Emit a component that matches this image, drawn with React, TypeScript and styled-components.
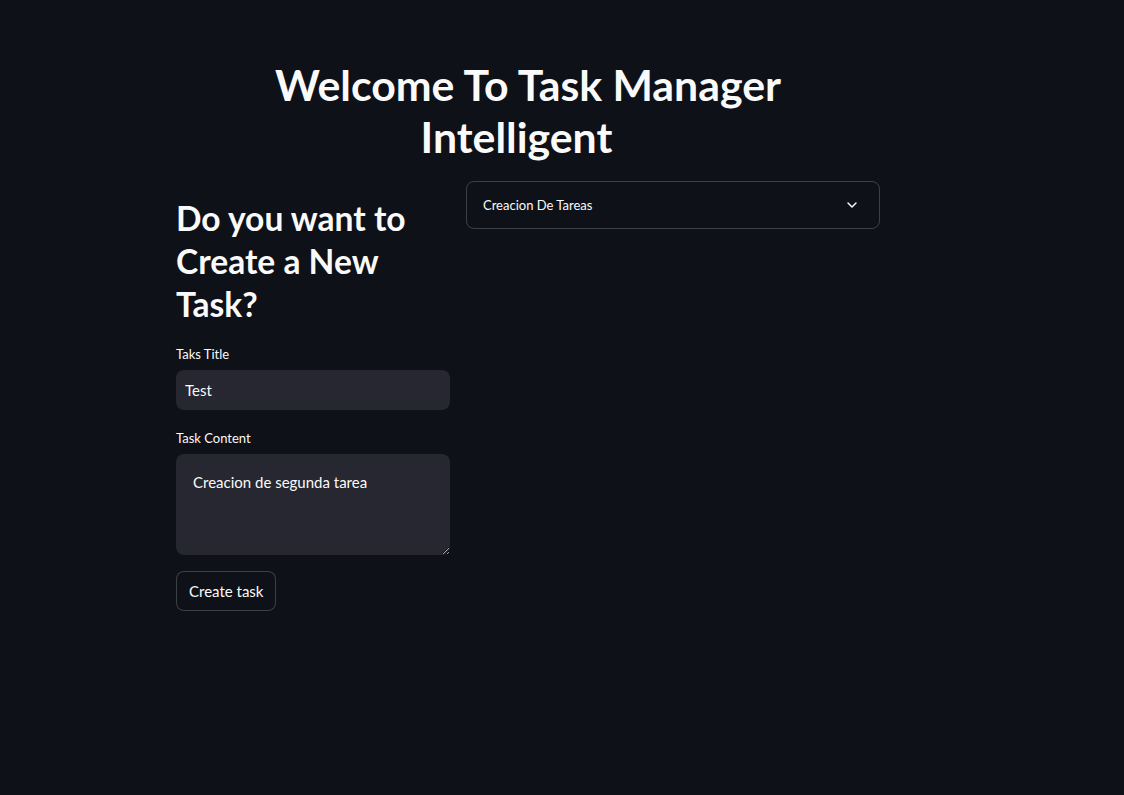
import React from "react";
import styled, { createGlobalStyle } from "styled-components";
import { ChevronDown } from "lucide-react";

const Global = createGlobalStyle`
  html, body { margin: 0; padding: 0; background: #0e1117; }
  body { font-family: Lato, "Noto Sans", sans-serif; color: #fafafa; }
  * { box-sizing: border-box; }
`;

const Page = styled.div`
  min-height: 795px;
  background: #0e1117;
  display: flex;
  padding: 59px 0 0 176px;
`;

const Main = styled.div`
  width: 704px;
  display: flex;
  flex-direction: column;
`;

const Title = styled.h1`
  margin: 0;
  padding: 0 90px;
  font-size: 42.8px;
  line-height: 52px;
  font-weight: 700;
  text-align: center;
  color: #fafafa;
`;

const HeadingAnchor = styled.span`
  display: inline-block;
  width: 23px;
  height: 1px;
`;

const Columns = styled.div`
  display: flex;
  gap: 16px;
  margin-top: 18px;
`;

const LeftCol = styled.div`
  width: 274px;
  display: flex;
  flex-direction: column;
`;

const RightCol = styled.div`
  flex: 1;
`;

const Subheader = styled.h2`
  margin: 0;
  padding-top: 16px;
  font-size: 33.6px;
  line-height: 43px;
  font-weight: 700;
  color: #fafafa;
`;

const Field = styled.div<{ $top: number }>`
  display: flex;
  flex-direction: column;
  margin-top: ${(p) => p.$top}px;
`;

const Label = styled.label`
  font-size: 13px;
  line-height: 16px;
  margin-bottom: 8px;
  color: #fafafa;
`;

const Input = styled.input`
  height: 40px;
  border: none;
  border-radius: 8px;
  background: #262730;
  color: #fafafa;
  font-family: inherit;
  font-size: 15px;
  padding: 0 9px;
  outline: none;
`;

const TextArea = styled.textarea`
  height: 101px;
  border: none;
  border-radius: 8px;
  background: #262730;
  color: #fafafa;
  font-family: inherit;
  font-size: 15px;
  line-height: 22px;
  padding: 17px 17px;
  outline: none;
  resize: vertical;
`;

const Button = styled.button`
  align-self: flex-start;
  margin-top: 16px;
  height: 40px;
  padding: 0 12px;
  border: 1px solid rgba(250, 250, 250, 0.2);
  border-radius: 8px;
  background: #0e1117;
  color: #fafafa;
  font-family: inherit;
  font-size: 15px;
`;

const Expander = styled.div`
  height: 48px;
  border: 1px solid rgba(250, 250, 250, 0.2);
  border-radius: 8px;
  display: flex;
  align-items: center;
  justify-content: space-between;
  padding: 0 19px 0 16px;
  font-size: 13px;
  color: #fafafa;
`;

export default function App() {
  return (
    <>
      <Global />
      <Page>
        <Main>
          <Title>
            Welcome To Task Manager Intelligent
            <HeadingAnchor />
          </Title>
          <Columns>
            <LeftCol>
              <Subheader>Do you want to Create a New Task?</Subheader>
              <Field $top={20}>
                <Label>Taks Title</Label>
                <Input defaultValue="Test" />
              </Field>
              <Field $top={20}>
                <Label>Task Content</Label>
                <TextArea defaultValue="Creacion de segunda tarea" />
              </Field>
              <Button>Create task</Button>
            </LeftCol>
            <RightCol>
              <Expander>
                <span>Creacion De Tareas</span>
                <ChevronDown size={16} strokeWidth={2.2} />
              </Expander>
            </RightCol>
          </Columns>
        </Main>
      </Page>
    </>
  );
}
